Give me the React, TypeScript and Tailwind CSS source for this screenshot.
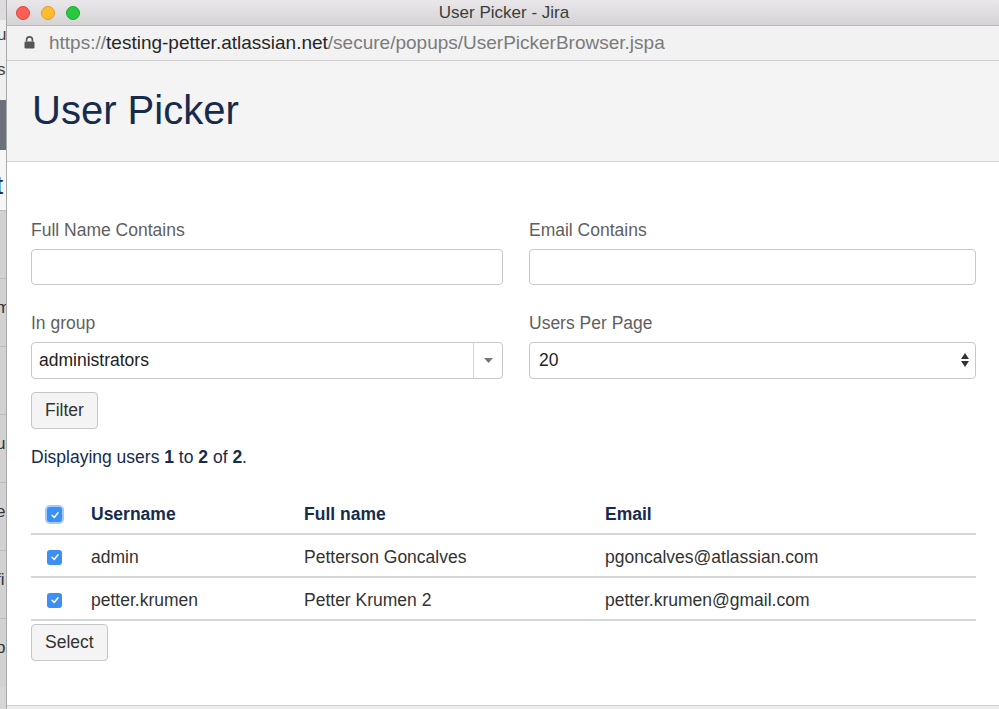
import { useState } from 'react';

const users = [
  { username: 'admin', fullName: 'Petterson Goncalves', email: 'pgoncalves@atlassian.com' },
  { username: 'petter.krumen', fullName: 'Petter Krumen 2', email: 'petter.krumen@gmail.com' },
];

function Check({ focus }: { focus?: boolean }) {
  return (
    <span
      className={
        'flex h-[15px] w-[15px] items-center justify-center rounded-[3px] bg-[#3b8ff6] ' +
        (focus ? 'shadow-[0_0_0_2px_rgba(90,160,250,0.55)]' : '')
      }
    >
      <svg width="10" height="10" viewBox="0 0 10 10">
        <path d="M2 5.3 L4.2 7.4 L8 2.8" fill="none" stroke="#fff" strokeWidth="1.5" strokeLinecap="round" strokeLinejoin="round" />
      </svg>
    </span>
  );
}

// strip of the window behind, peeking on the left edge
function BehindStrip() {
  return (
    <div className="flex w-[6px] shrink-0 flex-col bg-[#d6d6d6] text-[17px] leading-none text-[#444]">
      <div className="h-[20px] bg-[#dcdcdc]" />
      <div className="h-[80px] bg-[#efefef] overflow-hidden">
        <div className="pt-[6px] -ml-[3px]">u</div>
        <div className="pt-[18px] -ml-[3px]">s</div>
      </div>
      <div className="h-[50px] bg-[#6a707c]" />
      <div className="h-[60px] bg-[#f7f7f7] overflow-hidden">
        <div className="pt-[22px] -ml-[4px] text-[26px] text-[#172b4d]">t</div>
      </div>
      {['i', 'm', '.', 'u', 'e', 'fi', 'p'].map((c, i) => (
        <div key={i} className="h-[68px] border-t border-[#bdbdbd] bg-[#d2d2d2] overflow-hidden">
          <div className="pt-[20px] -ml-[4px] text-[#333]">{c}</div>
        </div>
      ))}
    </div>
  );
}

export default function App() {
  const [perPage, setPerPage] = useState('20');
  const label = 'mb-[9px] text-[17.5px] leading-[20px] text-[#5f5f5f]';
  const input = 'h-[36px] w-full rounded-[4px] border border-[#c8c8c8] bg-white';
  const btn = 'h-[37px] rounded-[4px] border border-[#c6c6c6] bg-[#f4f4f4] px-[13px] text-[17.5px] text-[#333]';

  return (
    <div className="flex h-[709px] w-[999px] overflow-hidden bg-white font-['Liberation_Sans',Arial,sans-serif]">
      <BehindStrip />
      <div className="flex min-w-0 flex-1 flex-col border-l border-[#a9a9a9]">
        {/* title bar */}
        <div className="relative flex h-[26px] shrink-0 items-center border-b border-[#b9b9b9] bg-gradient-to-b from-[#e9e7e9] to-[#d5d3d5]">
          <div className="flex gap-[11px] pl-[9px]">
            <span className="h-[14px] w-[14px] rounded-full border border-[#e0443e] bg-[#fd5f57]" />
            <span className="h-[14px] w-[14px] rounded-full border border-[#dea123] bg-[#febc2e]" />
            <span className="h-[14px] w-[14px] rounded-full border border-[#1aab29] bg-[#28c840]" />
          </div>
          <div className="absolute inset-x-0 top-0 flex h-[25px] items-center justify-center text-[17px] text-[#3c3c3c] pl-[2px]">
            User Picker - Jira
          </div>
        </div>

        {/* url bar */}
        <div className="flex h-[35px] shrink-0 items-center border-b border-[#cfcfcf] bg-[#f2f2f3] pl-[17px] text-[19px]">
          <svg width="11" height="13" viewBox="0 0 11 13" className="mr-[14px] mt-[-1px]">
            <path d="M2.6 5.5 V3.8 a2.9 2.9 0 0 1 5.8 0 V5.5" fill="none" stroke="#555" strokeWidth="1.6" />
            <rect x="0.5" y="5.5" width="10" height="7" rx="1.2" fill="#555" />
          </svg>
          <span className="text-[#7b7b7b]">https://</span>
          <span className="text-[#262626]">testing-petter.atlassian.net</span>
          <span className="text-[#7b7b7b]">/secure/popups/UserPickerBrowser.jspa</span>
        </div>

        {/* page header */}
        <div className="flex h-[101px] shrink-0 items-center border-b border-[#d2d2d2] bg-[#f4f4f4] pl-[25px]">
          <h1 className="mt-[-2px] text-[40px] leading-none text-[#172b4d]">User Picker</h1>
        </div>

        {/* form */}
        <div className="flex flex-1 flex-col pl-[24px] pr-[22px] pt-[58px]">
          <div className="grid grid-cols-[472px_447px] gap-x-[26px]">
            <div>
              <div className={label}>Full Name Contains</div>
              <input className={input} />
            </div>
            <div>
              <div className={label}>Email Contains</div>
              <input className={input} />
            </div>
            <div className="mt-[28px]">
              <div className={label}>In group</div>
              <div className="flex h-[37px] w-full items-stretch rounded-[4px] border border-[#c8c8c8] bg-white">
                <span className="flex flex-1 items-center pl-[7px] text-[17.5px] text-[#222]">administrators</span>
                <span className="flex w-[29px] items-center justify-center border-l border-[#d4d4d4]">
                  <svg width="9" height="5" viewBox="0 0 9 5">
                    <path d="M0 0 H9 L4.5 5 Z" fill="#777" />
                  </svg>
                </span>
              </div>
            </div>
            <div className="mt-[28px]">
              <div className={label}>Users Per Page</div>
              <div className="relative h-[37px] w-full">
                <select
                  value={perPage}
                  onChange={(e) => setPerPage(e.target.value)}
                  className="h-full w-full appearance-none rounded-[4px] border border-[#c8c8c8] bg-white pl-[9px] text-[17.5px] text-[#222] outline-none"
                >
                  <option>10</option>
                  <option>20</option>
                  <option>50</option>
                  <option>100</option>
                </select>
                <svg width="8" height="14" viewBox="0 0 8 14" className="pointer-events-none absolute right-[7px] top-[11px]">
                  <path d="M0 6 L4 0 L8 6 Z" fill="#333" />
                  <path d="M0 8 L4 14 L8 8 Z" fill="#333" />
                </svg>
              </div>
            </div>
          </div>

          <div className="mt-[13px]">
            <button className={btn}>Filter</button>
          </div>

          <p className="mt-[18px] text-[17.5px] leading-[20px] text-[#172b4d]">
            Displaying users <b>1</b> to <b>2</b> of <b>2</b>.
          </p>

          {/* results */}
          <table className="mt-[34px] w-[945px] border-collapse text-left text-[17.5px]">
            <thead>
              <tr className="h-[33px] border-b-2 border-[#d6d6d6] align-top text-[#172b4d]">
                <th className="w-[60px] pl-[16px] pt-[6px] font-normal">
                  <Check focus />
                </th>
                <th className="w-[213px] font-bold">Username</th>
                <th className="w-[301px] font-bold">Full name</th>
                <th className="font-bold">Email</th>
              </tr>
            </thead>
            <tbody className="text-[#333]">
              {users.map((u) => (
                <tr key={u.username} className="h-[43px] border-b-2 border-[#d6d6d6]">
                  <td className="pl-[16px] pt-[3px]">
                    <Check />
                  </td>
                  <td className="pt-[3px]">{u.username}</td>
                  <td className="pt-[3px]">{u.fullName}</td>
                  <td className="pt-[3px]">{u.email}</td>
                </tr>
              ))}
            </tbody>
          </table>

          <div className="mt-[3px]">
            <button className={btn}>Select</button>
          </div>
        </div>
        <div className="h-[4px] shrink-0 border-t border-[#d0d0d0] bg-[#ececec]" />
      </div>
    </div>
  );
}
